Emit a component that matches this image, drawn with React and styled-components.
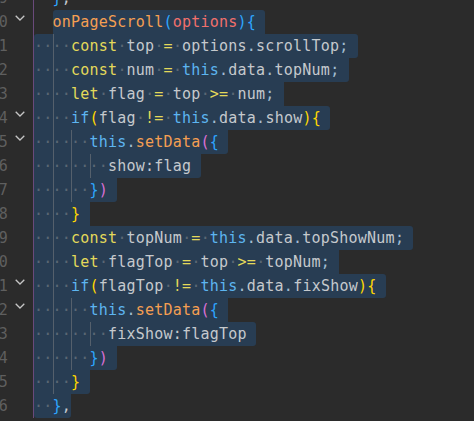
import React from "react";
import styled, { createGlobalStyle } from "styled-components";

const CHAR = 9.25;

const tokenColors = {
  k: "#e3d95a",
  c: "#5db5f0",
  f: "#f49f52",
  a: "#f2706c",
  v: "#c5c9cd",
  o: "#e3d95a",
  d: "#a3bdd2",
  p: "#c5c9cd",
  b1: "#ffd700",
  b2: "#da70d6",
  b3: "#2ea6ff",
};

const LINES = [
  { n: 9, indent: 2, selected: false, code: "b3:}|p:," },
  { n: 10, indent: 2, lead: true, fold: true, code: "f:onPageScroll|b3:(|a:options|b3:)|b3:{" },
  { n: 11, indent: 4, code: "k:const|_|v:top|_|o:=|_|v:options|d:.|v:scrollTop|d:;" },
  { n: 12, indent: 4, code: "k:const|_|v:num|_|o:=|_|c:this|d:.|v:data|d:.|v:topNum|d:;" },
  { n: 13, indent: 4, code: "k:let|_|v:flag|_|o:=|_|v:top|_|o:>=|_|v:num|d:;" },
  { n: 14, indent: 4, fold: true, code: "c:if|b1:(|v:flag|_|o:!=|_|c:this|d:.|v:data|d:.|v:show|b1:)|b1:{" },
  { n: 15, indent: 6, fold: true, code: "c:this|d:.|f:setData|b2:(|b3:{" },
  { n: 16, indent: 8, code: "v:show|p::|v:flag" },
  { n: 17, indent: 6, code: "b3:}|b2:)" },
  { n: 18, indent: 4, code: "b1:}" },
  { n: 19, indent: 4, code: "k:const|_|v:topNum|_|o:=|_|c:this|d:.|v:data|d:.|v:topShowNum|d:;" },
  { n: 20, indent: 4, code: "k:let|_|v:flagTop|_|o:=|_|v:top|_|o:>=|_|v:topNum|d:;" },
  { n: 21, indent: 4, fold: true, code: "c:if|b1:(|v:flagTop|_|o:!=|_|c:this|d:.|v:data|d:.|v:fixShow|b1:)|b1:{" },
  { n: 22, indent: 6, fold: true, code: "c:this|d:.|f:setData|b2:(|b3:{" },
  { n: 23, indent: 8, code: "v:fixShow|p::|v:flagTop" },
  { n: 24, indent: 6, code: "b3:}|b2:)" },
  { n: 25, indent: 4, code: "b1:}" },
  { n: 26, indent: 2, noEol: true, code: "b3:}|p:," },
];

const parse = (code) =>
  code.split("|").map((t) => {
    if (t === "_") return { kind: "ws", text: " " };
    const i = t.indexOf(":");
    return { kind: t.slice(0, i), text: t.slice(i + 1) };
  });

const rows = LINES.map((l) => {
  const toks = parse(l.code);
  const len = toks.reduce((s, t) => s + t.text.length, 0);
  const selected = l.selected !== false;
  const start = l.lead ? l.indent : 0;
  const end = l.indent + len + (l.noEol ? 0 : 1);
  return { ...l, toks, selected, start, end };
});

const GlobalStyle = createGlobalStyle`
  html, body {
    margin: 0;
    background: #2b2b2b;
    overflow: hidden;
  }
`;

const Editor = styled.div`
  margin-top: -14px;
  display: flex;
  flex-direction: column;
  font-family: "DejaVu Sans Mono", "Liberation Mono", monospace;
  font-size: 15px;
  letter-spacing: 0.22px;
  line-height: 24px;
`;

const Row = styled.div`
  display: flex;
  height: 24px;
`;

const LineNo = styled.div`
  width: 8px;
  overflow: hidden;
  display: flex;
  justify-content: flex-end;
  color: #5f5f5f;
`;

const Fold = styled.div`
  width: 25px;
  box-sizing: border-box;
  display: flex;
  align-items: flex-start;
  padding: 5px 0 0 7px;

  svg {
    display: block;
  }
`;

const Code = styled.div`
  flex: 1;
  display: flex;
  white-space: pre;
  border-left: 1px solid #6a4a7b;
`;

const Gap = styled.div`
  width: ${(p) => p.$cols * CHAR}px;
`;

const Selection = styled.div`
  display: flex;
  height: 24px;
  background: #283d53;
  padding-right: ${(p) => (p.$eol ? CHAR : 0)}px;
  border-radius: ${(p) => p.$radii};
`;

const Space = styled.span`
  display: inline-flex;
  justify-content: center;
  width: ${CHAR}px;
  letter-spacing: 0;
  color: #5b6774;
  box-shadow: ${(p) => (p.$guide ? "inset 1px 0 0 #55606c" : "none")};
`;

const Tok = styled.span`
  color: ${(p) => p.$color};
`;

const Chevron = () => (
  <svg width="10" height="6" viewBox="0 0 10 6">
    <polyline points="0.7,0.7 5,5 9.3,0.7" fill="none" stroke="#c5c5c5" strokeWidth="1.3" />
  </svg>
);

const radiiFor = (i) => {
  const r = rows[i];
  const prev = rows[i - 1];
  const next = rows[i + 1];
  const pOn = prev && prev.selected;
  const nOn = next && next.selected;
  const tl = !pOn || prev.start > r.start || prev.end <= r.start;
  const bl = !nOn || next.start > r.start || next.end <= r.start;
  const tr = !pOn || prev.end < r.end;
  const br = !nOn || next.end < r.end;
  return [tl, tr, br, bl].map((b) => (b ? "3px" : "0")).join(" ");
};

const renderTokens = (toks, selected) =>
  toks.map((t, i) =>
    t.kind === "ws" ? (
      <Space key={i}>{selected ? "·" : " "}</Space>
    ) : (
      <Tok key={i} $color={tokenColors[t.kind]}>
        {t.text}
      </Tok>
    )
  );

const CodeLine = ({ row, index }) => {
  const leading = Array.from({ length: row.indent }, (_, c) => (
    <Space key={"i" + c} $guide={c > 0 && c % 2 === 0}>
      {row.selected ? "·" : " "}
    </Space>
  ));

  if (!row.selected) {
    return (
      <Code>
        <Gap $cols={row.indent} />
        {renderTokens(row.toks, false)}
      </Code>
    );
  }

  return (
    <Code>
      {row.lead && <Gap $cols={row.indent} />}
      <Selection $eol={!row.noEol} $radii={radiiFor(index)}>
        {!row.lead && leading}
        {renderTokens(row.toks, true)}
      </Selection>
    </Code>
  );
};

const App = () => (
  <>
    <GlobalStyle />
    <Editor>
      {rows.map((row, i) => (
        <Row key={row.n}>
          <LineNo>{row.n}</LineNo>
          <Fold>{row.fold && <Chevron />}</Fold>
          <CodeLine row={row} index={i} />
        </Row>
      ))}
    </Editor>
  </>
);

export default App;
